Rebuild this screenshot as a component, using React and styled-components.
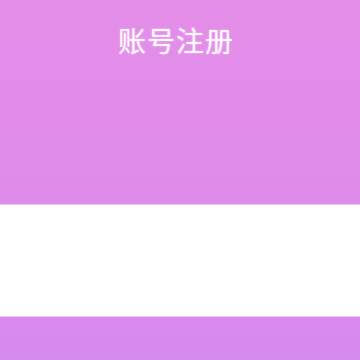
import React from "react";
import styled, { createGlobalStyle } from "styled-components";

const GlobalStyle = createGlobalStyle`
  html, body {
    margin: 0;
    padding: 0;
  }
  body {
    font-family: "Noto Sans CJK SC", "Noto Sans", sans-serif;
  }
`;

const Page = styled.div`
  width: 360px;
  height: 360px;
  display: flex;
  flex-direction: column;
  background: linear-gradient(180deg, #e48ee9 0%, #df8bea 55%, #d689ef 100%);
  overflow: hidden;
`;

const Header = styled.div`
  height: 205px;
  display: flex;
  justify-content: center;
  padding-top: 22px;
  box-sizing: border-box;
`;

const Title = styled.h1`
  margin: 0;
  font-size: 28px;
  font-weight: 400;
  line-height: 36px;
  letter-spacing: 1px;
  color: rgba(255, 255, 255, 0.92);
  text-shadow: 0 0 2px rgba(255, 255, 255, 0.6);
  transform: translateX(-4px);
`;

const FormBand = styled.div`
  height: 111px;
  background: #ffffff;
  box-shadow: 0 -1px 0 #f0c4f5, 0 1px 0 #f0c4f5;
`;

export default function App() {
  return (
    <>
      <GlobalStyle />
      <Page>
        <Header>
          <Title>账号注册</Title>
        </Header>
        <FormBand />
      </Page>
    </>
  );
}
